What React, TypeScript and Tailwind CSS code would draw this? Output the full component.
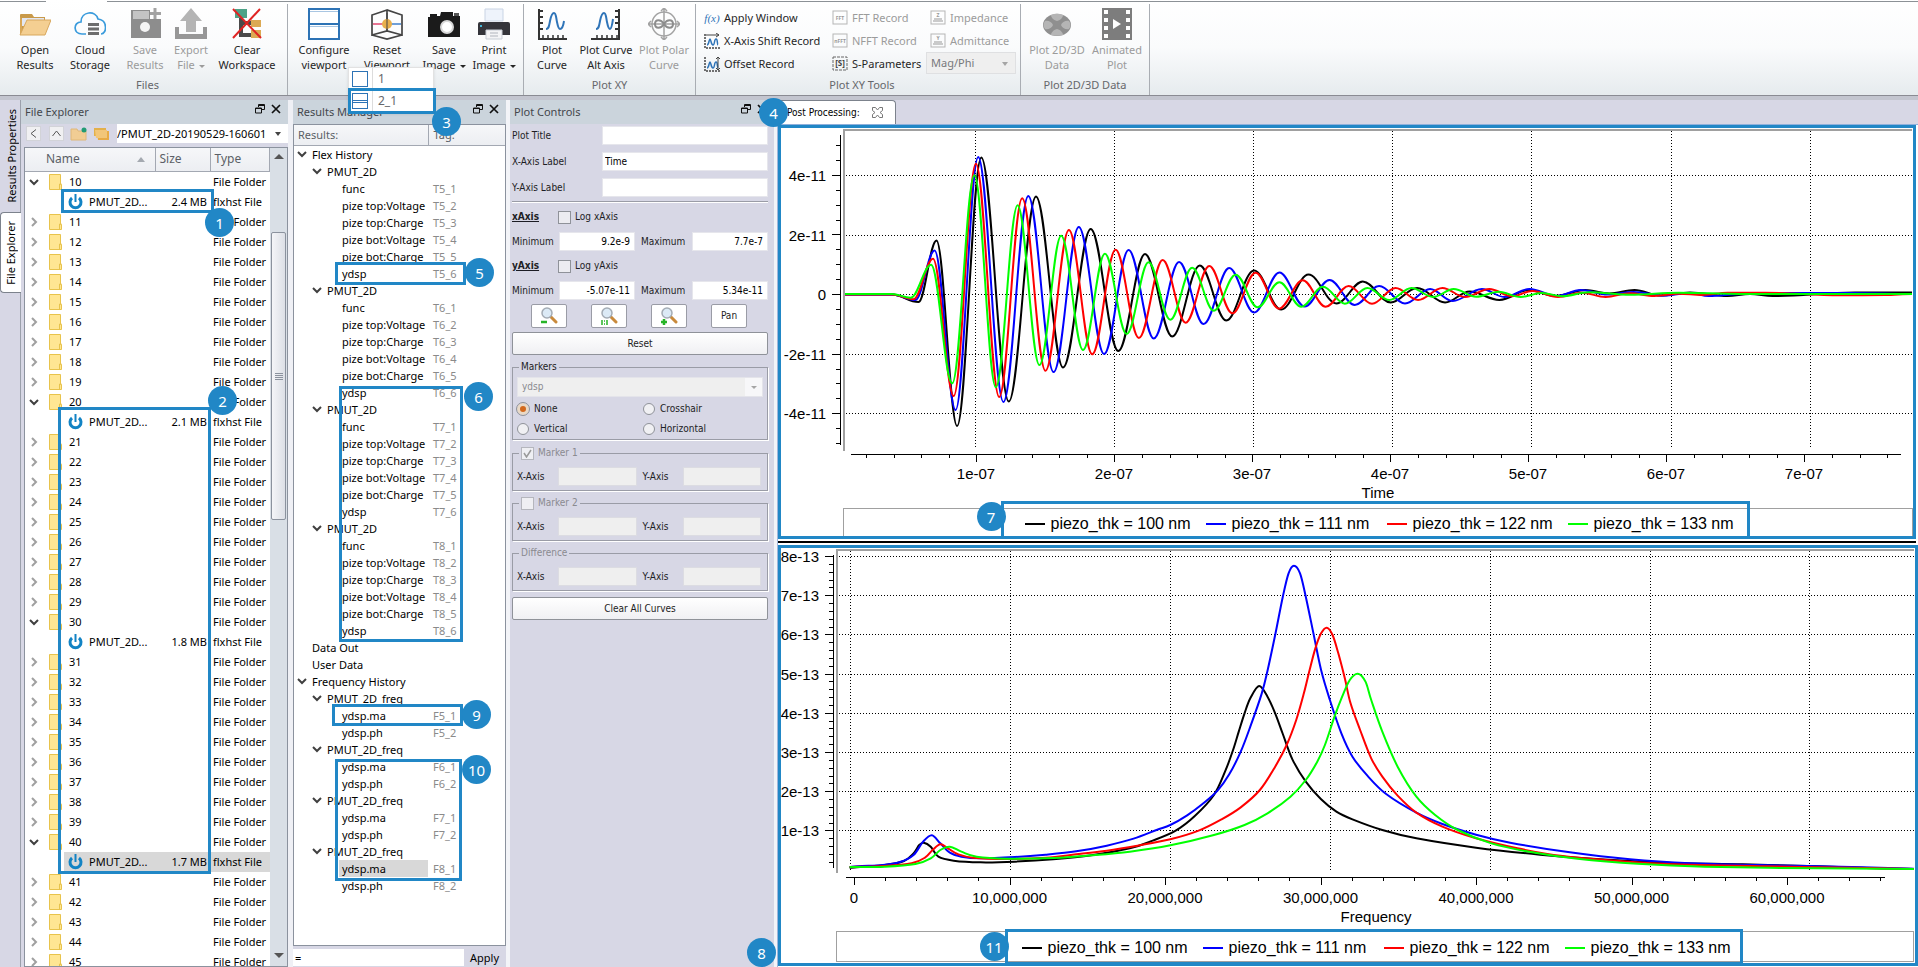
import type { ReactNode } from "react";
import clsx from "clsx";

/* ---------- data ---------- */

type FileRow = { name: string; size?: string; open?: boolean; selected?: boolean };

const sizes: Record<number, string> = { 10: "2.4 MB", 20: "2.1 MB", 30: "1.8 MB", 40: "1.7 MB" };

const fileRows: FileRow[] = [];
for (let n = 10; n <= 45; n++) {
  fileRows.push({ name: String(n), open: n in sizes });
  if (n in sizes) fileRows.push({ name: "PMUT_2D...", size: sizes[n], selected: n === 40 });
}

type ResultRow = { level: number; name: string; tag?: string; open?: boolean; selected?: boolean };

const flexNames = ["func", "pize top:Voltage", "pize top:Charge", "pize bot:Voltage", "pize bot:Charge", "ydsp"];
const freqNames = ["ydsp.ma", "ydsp.ph"];
const runs = [5, 6, 7, 8];

const resultRows: ResultRow[] = [
  { level: 0, name: "Flex History", open: true },
  ...runs.flatMap((r) => [
    { level: 1, name: "PMUT_2D", open: true },
    ...flexNames.map((name, i) => ({ level: 2, name, tag: `T${r}_${i + 1}` })),
  ]),
  { level: 0, name: "Data Out" },
  { level: 0, name: "User Data" },
  { level: 0, name: "Frequency History", open: true },
  ...runs.flatMap((r) => [
    { level: 1, name: "PMUT_2D_freq", open: true },
    ...freqNames.map((name, i) => ({ level: 2, name, tag: `F${r}_${i + 1}`, selected: r === 8 && i === 0 })),
  ]),
];

const legend = [
  { label: "piezo_thk = 100 nm", line: "bg-black" },
  { label: "piezo_thk = 111 nm", line: "bg-[#0000ff]" },
  { label: "piezo_thk = 122 nm", line: "bg-[#ff0000]" },
  { label: "piezo_thk = 133 nm", line: "bg-[#00ff00]" },
];
const colors = ["#000000", "#0000ff", "#ff0000", "#00ff00"];

type Pt = [number, number];

// turning points of each time history
const timeCurves: Pt[][] = [
  [[65, 166.5], [112, 166.5], [138.5, 174], [156.5, 112.5], [177.1, 298], [201.3, 29.5], [228.8, 273.5], [256, 68.5], [283.1, 239.5], [310.7, 101], [338.3, 223], [365, 126], [392.2, 208.5], [419.8, 137.5], [446.2, 192.5], [474.1, 142.5], [501.3, 181.5], [528.5, 146.5], [556.4, 175.5], [582.8, 153.5], [610.7, 174.5], [637.1, 160], [665.1, 174.5], [689.6, 163.5], [719.4, 172], [748.9, 162], [774.9, 168], [805.2, 162], [829.3, 165.5], [854.5, 162], [880.2, 167.5], [910, 164.5], [947.5, 168], [970, 166], [992.7, 168], [1075, 164.5], [1132, 164.5]],
  [[65, 166.5], [112, 166.5], [135.4, 172], [154.6, 122.5], [175.6, 282], [198.2, 29], [223.4, 274], [248.3, 68], [273.6, 244], [298.8, 99], [324.1, 226], [348.6, 122], [373.8, 210.5], [399.1, 134], [423.6, 196], [449.2, 140], [474.1, 184.5], [499.4, 144.5], [524.6, 178.5], [549.5, 152], [574.8, 177], [599.1, 158], [625, 175.5], [650.1, 161], [672.6, 173], [701.9, 161], [724.4, 169], [749.5, 161], [776.8, 168], [800.5, 162], [827.5, 166.5], [853.7, 164], [883.7, 167.5], [910, 165], [928.7, 168], [962.5, 166], [1011, 165], [1070, 165], [1132, 166]],
  [[65, 166.5], [112, 166.5], [133.5, 171.3], [153, 130.7], [173.7, 268], [195.9, 35.7], [219.2, 269], [242.2, 70.3], [265.5, 242.7], [288.9, 102], [312.2, 226.3], [335.6, 121.7], [358.9, 210], [382.7, 132], [405.6, 194.7], [429.3, 138], [452.3, 185.3], [475.6, 144.7], [499, 180.7], [522.7, 152.3], [545.7, 178.7], [568.6, 158], [592, 175.7], [615.6, 160], [638.1, 172], [662.4, 160], [685, 169], [709.4, 161], [731.9, 168.3], [752.3, 163], [778, 169], [802, 164.7], [825.6, 169], [850, 165.3], [874.4, 168], [898.7, 165.7], [922, 167], [947.5, 164.7], [985, 164.7], [1060, 167.3], [1105, 167], [1132, 166]],
  [[65, 166], [112, 166], [130.8, 169.7], [151.1, 136.7], [172.2, 255.3], [194.4, 47.3], [215.8, 259.3], [237.6, 77.3], [259.4, 237], [281.2, 107.7], [303, 222], [324.9, 125.7], [346.7, 206], [368.5, 134.3], [390.3, 191.7], [412.1, 139.7], [433.9, 182.7], [455.7, 146.7], [477.6, 179.3], [499.4, 154.3], [521.2, 178.7], [543, 158.7], [564.8, 175.7], [587.4, 160], [609.2, 172], [631.4, 160], [653.1, 169], [673.7, 161], [696.2, 168.7], [718.8, 163.7], [740.5, 169], [761.9, 165], [782.5, 168.3], [808.8, 164.3], [850, 166.7], [898.7, 164.7], [960, 166], [1132, 166]],
];

// frequency spectra, in samples of the plot raster
const freqCurves: Pt[][] = [
  [[208, 1013], [300, 1005], [350, 993], [375, 970], [390, 945], [402, 938], [420, 950], [440, 980], [480, 992], [550, 997], [640, 995], [740, 988], [840, 976], [940, 955], [1000, 932], [1060, 902], [1110, 858], [1160, 795], [1190, 722], [1210, 660], [1225, 604], [1240, 550], [1255, 505], [1278, 468], [1300, 500], [1320, 550], [1340, 612], [1365, 688], [1400, 755], [1440, 808], [1480, 845], [1522, 868], [1600, 900], [1689, 925], [1845, 953], [2012, 974], [2169, 988], [2345, 998], [2541, 1003], [2737, 1009], [2865, 1014], [2989, 1017]],
  [[208, 1011], [240, 1008], [290, 1006], [340, 996], [375, 975], [400, 935], [423, 916], [445, 940], [470, 968], [500, 980], [550, 985], [640, 981], [720, 974], [800, 964], [880, 947], [950, 926], [1010, 900], [1046, 885], [1090, 856], [1130, 822], [1170, 781], [1200, 733], [1230, 665], [1255, 590], [1285, 490], [1300, 422], [1320, 315], [1340, 200], [1355, 130], [1369, 107], [1385, 130], [1400, 200], [1420, 310], [1440, 420], [1463, 510], [1493, 610], [1522, 680], [1561, 737], [1610, 792], [1689, 848], [1757, 882], [1845, 914], [1934, 938], [2090, 967], [2247, 988], [2404, 1000], [2580, 1005], [2855, 1012], [2989, 1016]],
  [[208, 1011], [300, 1008], [370, 1000], [405, 983], [425, 960], [445, 943], [465, 955], [490, 972], [530, 983], [620, 987], [720, 983], [800, 973], [880, 962], [960, 947], [1046, 928], [1120, 902], [1180, 868], [1230, 832], [1280, 780], [1320, 710], [1350, 645], [1375, 570], [1395, 490], [1410, 420], [1425, 355], [1440, 310], [1455, 293], [1470, 315], [1485, 370], [1502, 445], [1517, 520], [1542, 600], [1571, 685], [1600, 740], [1640, 797], [1689, 848], [1757, 890], [1845, 925], [1953, 955], [2071, 978], [2208, 992], [2345, 1002], [2600, 1009], [2865, 1014], [2989, 1017]],
  [[208, 1011], [300, 1010], [380, 1002], [420, 985], [445, 960], [470, 950], [500, 965], [540, 980], [620, 986], [740, 984], [840, 976], [940, 965], [1046, 946], [1160, 915], [1240, 885], [1300, 850], [1360, 800], [1400, 750], [1430, 695], [1450, 645], [1475, 560], [1495, 500], [1515, 450], [1536, 431], [1556, 455], [1571, 510], [1600, 605], [1640, 710], [1689, 800], [1738, 855], [1797, 900], [1885, 940], [1992, 967], [2110, 986], [2267, 1001], [2443, 1010], [2737, 1015], [2989, 1017]],
];

// half-cosine between two turning points
function wavePath(pts: Pt[]) {
  let d = `M${pts[0][0]} ${pts[0][1]}`;
  for (let i = 1; i < pts.length; i++) {
    const [x0, y0] = pts[i - 1];
    const [x1, y1] = pts[i];
    const k = (x1 - x0) * 0.364;
    d += `C${x0 + k} ${y0} ${x1 - k} ${y1} ${x1} ${y1}`;
  }
  return d;
}

// Catmull-Rom through the samples
function splinePath(raw: Pt[]) {
  const p = raw.map(([x, y]): Pt => [x / 2.613 - 10, y / 3 - 18]);
  let d = `M${p[0][0]} ${p[0][1]}`;
  for (let i = 0; i < p.length - 1; i++) {
    const a = p[Math.max(i - 1, 0)];
    const b = p[i];
    const c = p[i + 1];
    const e = p[Math.min(i + 2, p.length - 1)];
    d += `C${b[0] + (c[0] - a[0]) / 6} ${b[1] + (c[1] - a[1]) / 6} ${c[0] - (e[0] - b[0]) / 6} ${c[1] - (e[1] - b[1]) / 6} ${c[0]} ${c[1]}`;
  }
  return d;
}

const range = (n: number) => Array.from({ length: n }, (_, i) => i);

/* ---------- callouts ---------- */

function Badge({ n, className }: { n: number; className: string }) {
  return (
    <span
      className={clsx(
        "absolute z-30 flex size-[29px] items-center justify-center rounded-full bg-[#2187c6] font-['Noto_Sans',sans-serif] text-[15px] text-white",
        className
      )}
    >
      {n}
    </span>
  );
}

function Frame({ className }: { className: string }) {
  return <div className={clsx("pointer-events-none absolute z-20 border-3 border-[#2187c6]", className)} />;
}

/* ---------- icons ---------- */

function Icon({ children, size = 32 }: { children: ReactNode; size?: number }) {
  return (
    <svg width={size} height={size} viewBox={`0 0 ${size} ${size}`} className="shrink-0" fill="none">
      {children}
    </svg>
  );
}

const OpenIcon = () => (
  <Icon>
    <path d="M1 27V7q0-1 1-1h11l2 3h11v5" fill="#c99a4a" />
    <path d="M3 10h22v8H3z" fill="#e3e7f1" />
    <path d="M1 27V9l2 2v12z" fill="#d9a859" />
    <path d="M1 27L8 12h24l-6 15z" fill="#f4cf92" stroke="#d8a75c" />
  </Icon>
);
const CloudIcon = () => (
  <Icon>
    <path d="M12 26H8C-1 26-1 14 7 14 7 3 22 2 24 11 34 12 33 26 27 26" stroke="#3a9bdc" strokeWidth="1.700" />
    <path d="M14 15h11v3H14zM14 19.500h11v3H14zM14 24h11v3H14z" fill="#6d6d6d" />
  </Icon>
);
const SaveIcon = () => (
  <Icon>
    <path d="M2 2h19v9h11v19H2z" fill="#8d8d8d" />
    <path d="M4 3h16v8H4z" fill="#c4c4c4" />
    <path d="M26 0v11M21 5.500h11" stroke="#a3a3a3" strokeWidth="3" />
    <circle cx="16" cy="19" r="5" fill="#f4f4f4" />
  </Icon>
);
const ExportIcon = () => (
  <Icon>
    <path d="M16 0l11 13h-6v11H11V13H5z" fill="#b4b4b4" />
    <path d="M0 19h4v7h24v-7h4v12H0z" fill="#979797" />
  </Icon>
);
const ClearIcon = () => (
  <Icon>
    <path d="M10 8v19h10M10 15h10" stroke="#4a4a4a" strokeWidth="4" />
    <path d="M4 1h12v9H4z" fill="#4da287" />
    <path d="M20 12h10v7H20zM20 22h10v8H20z" fill="#dca954" />
    <path d="M2 1l28 29M29 1L2 30" stroke="#e02424" strokeWidth="2" />
  </Icon>
);
const ConfigureIcon = () => (
  <Icon>
    <path d="M1 1h30v30H1z" fill="#fff" stroke="#2d73b5" strokeWidth="2" />
    <path d="M2 3.500h28M2 18.500h28" stroke="#a9c6e2" />
    <path d="M1 16h30" stroke="#2d73b5" strokeWidth="2" />
  </Icon>
);
const ResetIcon = () => (
  <Icon>
    <path d="M16 2L1 7v20l15-4 15 4V7z M16 2v21 M1 27l15 4 15-4" stroke="#444" strokeWidth="1.700" />
    <path d="M2 16h10" stroke="#e0466e" strokeWidth="1.500" />
    <path d="M20 16h10" stroke="#6f9fd8" strokeWidth="2" />
    <circle cx="16" cy="16" r="5" fill="#e8b04e" />
    <path d="M16 5v18" stroke="#444" strokeWidth="1" />
  </Icon>
);
const CameraIcon = () => (
  <Icon>
    <path d="M0 9h2V6h7v2h3l1-4h12v4h7v21H0z" fill="#1b1b1b" />
    <path d="M26 5h5v3h-5z" fill="#555" />
    <circle cx="19" cy="19" r="7" fill="#d8d8d8" />
    <circle cx="19" cy="19" r="5" fill="#fff" />
  </Icon>
);
const PrintIcon = () => (
  <Icon>
    <path d="M7 1h18v12H7z" fill="#eef3fb" stroke="#c9d4e4" />
    <path d="M0 16q0-2 2-2h28q2 0 2 2v11H0z" fill="#34343a" />
    <path d="M2 18h2" stroke="#44b6d8" strokeWidth="2" />
    <path d="M8 22h16v9H8z" fill="#f4f4f6" stroke="#c9ced6" />
    <path d="M12 25h8M12 28h8" stroke="#b0b4bc" />
  </Icon>
);
const PlotIcon = ({ alt }: { alt?: boolean }) => (
  <Icon>
    <path d={alt ? "M29 1v30H1M29 3h-4M29 9h-4M29 15h-4M29 21h-4" : "M3 1v30h28M3 3h4M3 9h4M3 15h4M3 21h4"} stroke="#333" strokeWidth="2" />
    <path d="M7 30v-3M12 30v-3M17 30v-3M22 30v-3M27 30v-3" stroke="#333" strokeWidth="1.500" />
    <path d={alt ? "M6 21c3 0 3-3 4-8s2-8 4-8 2 4 3 9 2 7 3 7 2-3 3-10" : "M10 21c3 0 3-3 4-8s2-8 4-8 2 4 3 9 2 7 3 7 3-1 4-8"} stroke="#2f74b8" strokeWidth="2" />
  </Icon>
);
const PolarIcon = () => (
  <Icon>
    <circle cx="16" cy="16" r="12" stroke="#a3a3a3" strokeWidth="1.500" />
    <path d="M16 0v32M0 16h32M13 3l3-3 3 3M13 29l3 3 3-3M3 13l-3 3 3 3M29 13l3 3-3 3" stroke="#a3a3a3" strokeWidth="1.500" />
    <path d="M16 16c-3-5-9-5-9 0s6 5 9 0 9-5 9 0-6 5-9 0" stroke="#8d8d8d" strokeWidth="2" />
  </Icon>
);
const Plot3dIcon = () => (
  <Icon>
    <ellipse cx="16" cy="17" rx="14" ry="11" fill="#8f8f8f" />
    <path d="M16 13c-4-1-6-4-6-6 4-2 8-2 12 0 0 2-2 5-6 6zM16 21c-4 1-6 4-6 6 4 1 8 1 12 0 0-2-2-5-6-6zM12 17c-1-3-5-5-8-4-2 3-2 5 0 8 3 1 7-1 8-4zM20 17c1-3 5-5 8-4 2 3 2 5 0 8-3 1-7-1-8-4z" fill="#b5b5b5" />
  </Icon>
);
const FilmIcon = () => (
  <Icon>
    <path d="M1 0h30v32H1z" fill="#7d7d7d" />
    <path d="M3 2h4v4H3zM3 10h4v4H3zM3 18h4v4H3zM3 26h4v4H3zM25 2h4v4h-4zM25 10h4v4h-4zM25 18h4v4h-4zM25 26h4v4h-4z" fill="#fff" />
    <path d="M12 11l8 5-8 5z" fill="#fff" />
  </Icon>
);

const ShiftIcon = ({ vertical }: { vertical?: boolean }) => (
  <Icon size={16}>
    <path d="M1 1v14h15" stroke="#444" strokeDasharray="2 1" strokeWidth="1.500" />
    <path d="M3 12c2 0 2-6 3-6s1 6 3 6 1-6 3-6 1 6 2 6" stroke="#2f74b8" strokeWidth="1.500" />
    {vertical ? (
      <path d="M14 1v13M12 3l2-2 2 2M12 12l2 2 2-2" stroke="#444" />
    ) : (
      <path d="M2 2h13M12 0l3 2-3 2" stroke="#444" />
    )}
  </Icon>
);
const BoxIcon = ({ text, dark }: { text: string; dark?: boolean }) => (
  <Icon size={16}>
    <rect x="1" y="1" width="14" height="13" stroke={dark ? "#666" : "#b5b5b5"} strokeDasharray={dark ? "3 1" : undefined} />
    <text x="8" y="10" textAnchor="middle" fontSize={dark ? 8 : 5} fontWeight="bold" fill={dark ? "#444" : "#999"}>
      {text}
    </text>
  </Icon>
);
const MatrixIcon = ({ text }: { text: string }) => (
  <Icon size={16}>
    <rect x="1" y="1" width="14" height="13" stroke="#b5b5b5" />
    <text x="8" y="7" textAnchor="middle" fontSize="5" fontWeight="bold" fill="#999">
      {text}
    </text>
    <path d="M4 9h8M3 11h10" stroke="#999" />
  </Icon>
);

const Chevron = ({ open }: { open?: boolean }) => (
  <svg width="10" height="10" viewBox="0 0 10 10" fill="none" className="shrink-0">
    {open ? <path d="M1 3l4 4 4-4" stroke="#404040" strokeWidth="2" /> : <path d="M3 1l4 4-4 4" stroke="#a0a0a0" strokeWidth="2" />}
  </svg>
);
const FolderIcon = () => (
  <svg width="13" height="16" viewBox="0 0 13 16" className="shrink-0">
    <path d="M.5.5h11v10h1v5H.5z" fill="#ffe693" stroke="#e8c34c" />
    <path d="M10.5 15v-5h2" fill="none" stroke="#e8c34c" />
  </svg>
);
const PowerIcon = () => (
  <svg width="15" height="16" viewBox="0 0 15 16" fill="none" className="shrink-0">
    <path d="M4 4a5.5 5.5 0 1 0 7 0" stroke="#1283c4" strokeWidth="3" />
    <path d="M7.500 0v8" stroke="#1283c4" strokeWidth="2" />
  </svg>
);
const Magnifier = ({ kind }: { kind: "minus" | "one" | "plus" }) => (
  <svg width="18" height="18" viewBox="0 0 18 18" fill="none">
    <path d="M10 9l6 6" stroke="#c98a3c" strokeWidth="3" strokeLinecap="round" />
    <circle cx="7" cy="6" r="5" fill="#dceaf6" stroke="#a4acb5" strokeWidth="1.500" />
    {kind === "minus" && <path d="M1 15h6" stroke="#27b427" strokeWidth="2.500" />}
    {kind === "plus" && <path d="M1 15h6M4 12v6" stroke="#27b427" strokeWidth="2.500" />}
    {kind === "one" && <path d="M2 13v5M7 13v5M4 14h1M4 17h1" stroke="#27b427" strokeWidth="1.500" />}
  </svg>
);

/* ---------- ribbon ---------- */

type BigButtonProps = { icon: ReactNode; top: string; bottom: string; width: string; disabled?: boolean; menu?: boolean };

function BigButton({ icon, top, bottom, width, disabled, menu }: BigButtonProps) {
  return (
    <button
      type="button"
      disabled={disabled}
      className={clsx("flex shrink-0 flex-col items-center whitespace-nowrap leading-[15px]", width, disabled ? "text-[#9b9b9b]" : "text-[#262626]")}
    >
      {icon}
      <span className="mt-0.5">{top}</span>
      <span className="flex items-center gap-1">
        {bottom}
        {menu && <span className="mt-1 border-x-3 border-t-3 border-x-transparent border-t-current" />}
      </span>
    </button>
  );
}

function Group({ label, children, className }: { label: string; children: ReactNode; className: string }) {
  return (
    <div className={clsx("flex shrink-0 flex-col border-r border-[#a9adb3]", className)}>
      <div className="flex h-[70px] pt-1">{children}</div>
      <div className="pt-[3px] text-center text-[#66676b]">{label}</div>
    </div>
  );
}

function SmallButton({ icon, children, disabled }: { icon: ReactNode; children: ReactNode; disabled?: boolean }) {
  return (
    <button type="button" disabled={disabled} className={clsx("flex h-[23px] items-center gap-1 whitespace-nowrap", disabled ? "text-[#9b9b9b]" : "text-[#262626]")}>
      {icon}
      {children}
    </button>
  );
}

function Ribbon() {
  return (
    <header className="shrink-0 border-b border-[#8a8b93] bg-linear-to-b from-white via-[#fafbfc] to-[#e6ebee]">
      <div className="flex h-1 items-start">
        <div className="h-0.5 w-[46px] border-b border-[#8c9196]" />
        <div className="w-[61px]" />
        <div className="h-0.5 flex-1 border-b border-[#8c9196]" />
      </div>
      <div className="flex h-[91px]">
        <Group label="Files" className="w-[288px] pl-2">
          <BigButton icon={<OpenIcon />} top="Open" bottom="Results" width="w-[54px]" />
          <BigButton icon={<CloudIcon />} top="Cloud" bottom="Storage" width="w-14" />
          <BigButton icon={<SaveIcon />} top="Save" bottom="Results" width="w-[54px]" disabled />
          <BigButton icon={<ExportIcon />} top="Export" bottom="File" width="w-[38px]" disabled menu />
          <BigButton icon={<ClearIcon />} top="Clear" bottom="Workspace" width="w-[74px]" />
        </Group>
        <Group label="" className="w-[236px]">
          <BigButton icon={<ConfigureIcon />} top="Configure" bottom="viewport" width="w-[72px]" />
          <BigButton icon={<ResetIcon />} top="Reset" bottom="Viewport" width="w-[54px]" />
          <BigButton icon={<CameraIcon />} top="Save" bottom="Image" width="w-[60px]" menu />
          <BigButton icon={<PrintIcon />} top="Print" bottom="Image" width="w-10" menu />
        </Group>
        <Group label="Plot XY" className="w-[172px]">
          <BigButton icon={<PlotIcon />} top="Plot" bottom="Curve" width="w-14" />
          <BigButton icon={<PlotIcon alt />} top="Plot Curve" bottom="Alt Axis" width="w-[52px]" />
          <BigButton icon={<PolarIcon />} top="Plot Polar" bottom="Curve" width="w-16" disabled />
        </Group>
        <Group label="Plot XY Tools" className="w-[325px] pl-2">
          <div className="-mt-0.5 w-32">
            <SmallButton icon={<span className="w-4 text-center font-['Liberation_Serif',serif] text-[11px] text-[#2f74b8] italic">f(x)</span>}>Apply Window</SmallButton>
            <SmallButton icon={<ShiftIcon />}>X-Axis Shift Record</SmallButton>
            <SmallButton icon={<ShiftIcon vertical />}>Offset Record</SmallButton>
          </div>
          <div className="-mt-0.5 w-[98px]">
            <SmallButton icon={<BoxIcon text="FFT" />} disabled>FFT Record</SmallButton>
            <SmallButton icon={<BoxIcon text="nFFT" />} disabled>NFFT Record</SmallButton>
            <SmallButton icon={<BoxIcon text="[S]" dark />}>S-Parameters</SmallButton>
          </div>
          <div className="-mt-0.5">
            <SmallButton icon={<MatrixIcon text="Z" />} disabled>Impedance</SmallButton>
            <SmallButton icon={<MatrixIcon text="Y" />} disabled>Admittance</SmallButton>
            <div className="relative -ml-1 w-[90px]">
              <select aria-label="S-parameter format" disabled className="block h-[22px] w-full appearance-none border border-[#dfe0e2] bg-[#efefef] pl-1 text-[#77787c] opacity-100">
                <option>Mag/Phi</option>
              </select>
              <span className="absolute top-2.5 right-2 border-x-3 border-t-4 border-x-transparent border-t-[#a5a5a5]" />
            </div>
          </div>
        </Group>
        <Group label="Plot 2D/3D Data" className="w-[129px]">
          <BigButton icon={<Plot3dIcon />} top="Plot 2D/3D" bottom="Data" width="w-[72px]" disabled />
          <BigButton icon={<FilmIcon />} top="Animated" bottom="Plot" width="w-12" disabled />
        </Group>
      </div>
    </header>
  );
}

function ViewportMenu() {
  return (
    <div className="absolute top-[67px] left-[348px] z-10 w-[86px] border border-[#e2e2e2] bg-white text-[12px] text-[#66676b] shadow-sm">
      {["1", "2_1"].map((item) => (
        <button key={item} type="button" className="flex h-[22px] w-full items-center text-left">
          <span className="flex h-full w-6 items-center border-r border-[#dcdcdc] pl-[3px]">
            <span className="flex size-4 flex-col justify-center border border-[#2d73b5]">
              {item === "2_1" && <span className="h-[3px] border-y border-[#2d73b5]" />}
            </span>
          </span>
          <span className="pl-[5px]">{item}</span>
        </button>
      ))}
    </div>
  );
}

/* ---------- docks ---------- */

function DockTitle({ children }: { children: ReactNode }) {
  return (
    <div className="flex h-6 shrink-0 items-center bg-[#cbd4dc] pr-[7px] pl-1 text-[#44474c]">
      <h2 className="flex-1">{children}</h2>
      <button type="button" aria-label="Float" className="mr-1.5 mb-1.5">
        <svg width="10" height="10" viewBox="0 0 10 10" fill="none" stroke="#111">
          <path d="M3.500 3V.500h6v5H7M3 1.500h7M.500 4h6v5h-6zM0 4.500h7" />
        </svg>
      </button>
      <button type="button" aria-label="Close" className="mb-1.5">
        <svg width="10" height="10" viewBox="0 0 10 10" stroke="#111" strokeWidth="1.700">
          <path d="M1 1l8 8M9 1L1 9" />
        </svg>
      </button>
    </div>
  );
}

function SideTabs() {
  return (
    <nav className="flex w-[21px] shrink-0 flex-col border-r border-[#9ba0ab]">
      <button type="button" className="flex h-[112px] items-center justify-center whitespace-nowrap pl-1">
        <span className="rotate-180 [writing-mode:vertical-rl]">Results Properties</span>
      </button>
      <button type="button" className="flex h-[81px] w-[21px] items-center justify-center rounded-l-sm border border-r-0 border-[#7c828c] bg-white whitespace-nowrap">
        <span className="rotate-180 [writing-mode:vertical-rl]">File Explorer</span>
      </button>
    </nav>
  );
}

const toolBtn = "flex h-[15px] w-[15px] items-center justify-center border border-[#d2d3d8] bg-[#f0f0f2] text-[#555]";

function FileExplorer() {
  return (
    <section className="flex w-[267px] shrink-0 flex-col">
      <DockTitle>File Explorer</DockTitle>
      <div className="flex h-[23px] shrink-0 items-start pl-[5px]">
        <div className="flex h-[19px] flex-1 items-center">
          <button type="button" aria-label="Back" className={toolBtn}>
            <svg width="7" height="9" viewBox="0 0 7 9" fill="none" stroke="currentColor"><path d="M6 .5L1 4.500l5 4" /></svg>
          </button>
          <button type="button" aria-label="Up" className={clsx(toolBtn, "ml-2")}>
            <svg width="9" height="7" viewBox="0 0 9 7" fill="none" stroke="currentColor"><path d="M.5 6L4.500 1l4 5" /></svg>
          </button>
          <button type="button" aria-label="New folder" className="ml-1.5">
            <svg width="17" height="14" viewBox="0 0 17 14">
              <path d="M1 2h6l1 2h8v9H1z" fill="#f1cd94" stroke="#e0b878" />
              <circle cx="14" cy="3" r="2.500" fill="#219c74" />
            </svg>
          </button>
          <button type="button" aria-label="Folders" className="ml-1.5">
            <svg width="17" height="14" viewBox="0 0 17 14">
              <path d="M1 1h12v8H1z" fill="#e3b04a" />
              <path d="M4 4h12v9H5z" fill="#e8ab45" />
              <path d="M2 3h12v8H3z" fill="#f2c679" />
            </svg>
          </button>
        </div>
        <div className="flex h-[19px] w-[171px] items-center bg-white">
          <div className="flex w-[150px] justify-end overflow-hidden">
            <select aria-label="Folder path" className="shrink-0 appearance-none bg-white text-black">
              <option>D/PMUT_2D-20190529-160601</option>
            </select>
          </div>
          <span className="ml-2 border-x-3 border-t-4 border-x-transparent border-t-[#444]" />
        </div>
      </div>
      <div className="ml-[3px] flex min-h-0 flex-1 border border-[#8b929e] bg-white">
        <div className="min-w-0 flex-1 overflow-hidden">
          <table className="w-full table-fixed border-collapse">
            <thead>
              <tr className="h-[23px] bg-linear-to-b from-[#f6f7f9] to-[#eceef2] text-left text-[12px] text-[#5b5f66]">
                <th className="w-[130px] border-r border-b border-[#a3a8b2] p-0 pl-[21px] font-normal">
                  <span className="flex items-center justify-between pr-2.5">
                    Name
                    <span className="border-x-4 border-b-5 border-x-transparent border-b-[#a4a9b0]" />
                  </span>
                </th>
                <th className="w-[55px] border-r border-b border-[#a3a8b2] p-0 pl-1 font-normal">Size</th>
                <th className="border-r border-b border-[#a3a8b2] p-0 pl-1 font-normal">Type</th>
              </tr>
            </thead>
            <tbody className="whitespace-nowrap">
              {fileRows.map((row, i) => (
                <tr key={i} className="h-5">
                  <td className="overflow-hidden p-0">
                    {row.size ? (
                      <div className={clsx("ml-[39px] flex h-5 items-center gap-1.5 pl-1", row.selected && "bg-[#d8d8d8]")}>
                        <PowerIcon />
                        {row.name}
                      </div>
                    ) : (
                      <div className="flex h-5 items-center pl-1">
                        <Chevron open={row.open} />
                        <span className="ml-2.5 flex items-center gap-[7px]">
                          <FolderIcon />
                          {row.name}
                        </span>
                      </div>
                    )}
                  </td>
                  <td className={clsx("p-0 pr-[3px] text-right", row.selected && "bg-[#d8d8d8]")}>{row.size}</td>
                  <td className={clsx("overflow-hidden p-0 pl-[3px]", row.selected && "bg-[#d8d8d8]")}>{row.size ? "flxhst File" : "File Folder"}</td>
                </tr>
              ))}
            </tbody>
          </table>
        </div>
        <div className="flex w-[17px] shrink-0 flex-col items-center bg-[#d9dfe6]">
          <span className="mt-1.5 mb-[73px] border-x-5 border-b-5 border-x-transparent border-b-[#555]" />
          <div className="flex h-[288px] w-[15px] flex-col items-center justify-center gap-px rounded-xs border border-[#8b929e] bg-linear-to-r from-[#f4f5f8] to-[#dcdfe6]">
            {range(4).map((i) => (
              <span key={i} className="h-px w-2 bg-[#8b929e]" />
            ))}
          </div>
          <span className="mt-auto mb-2 border-x-5 border-t-5 border-x-transparent border-t-[#555]" />
        </div>
      </div>
    </section>
  );
}

function ResultsManager() {
  return (
    <section className="flex w-[213px] shrink-0 flex-col">
      <DockTitle>Results Manager</DockTitle>
      <div className="min-h-0 flex-1 border border-[#8b929e] bg-white">
        <table className="w-full table-fixed border-collapse">
          <thead>
            <tr className="h-5 bg-linear-to-b from-[#f6f7f9] to-[#eceef2] text-left text-[#5b5f66]">
              <th className="w-[134px] border-r border-b border-[#a3a8b2] p-0 pl-1 font-normal">Results:</th>
              <th className="border-b border-[#a3a8b2] p-0 pl-[5px] font-normal">Tag:</th>
            </tr>
          </thead>
          <tbody className="whitespace-nowrap leading-[17px]">
            {resultRows.map((row, i) => (
              <tr key={i} className="h-[17px]">
                <td className="p-0">
                  <div className={clsx("flex h-[17px] items-center", row.level === 0 && "pl-[3px]", row.level === 1 && "pl-[18px]", row.level === 2 && "pl-[45px]")}>
                    {row.level < 2 && <span className="flex w-[15px] justify-start">{row.open && <Chevron open />}</span>}
                    <span className={clsx(row.level === 2 && "flex-1 pl-[3px]", row.selected && "bg-[#d8d8d8]")}>{row.name}</span>
                  </div>
                </td>
                <td className="p-0 pl-[5px] text-[#8a8a8a]">{row.tag}</td>
              </tr>
            ))}
          </tbody>
        </table>
      </div>
      <div className="flex h-[21px] shrink-0 items-center pt-0.5 pr-[7px]">
        <input aria-label="Expression" defaultValue="=" className="h-[17px] w-[171px] bg-white px-0.5" />
        <button type="button" className="ml-auto">Apply</button>
      </div>
    </section>
  );
}

const field = "h-[19px] min-w-0 border border-[#e6e6ec] bg-white px-0.5 text-black";
const fieldOff = "h-[19px] min-w-0 border border-[#dcdce2] bg-[#efefef]";
const wideBtn = "h-[23px] w-full shrink-0 rounded-xs border border-[#8f9299] bg-linear-to-b from-white to-[#f0f0f3]";

function TitleField({ id, label, value }: { id: string; label: string; value: string }) {
  return (
    <div className="flex items-center">
      <label htmlFor={id} className="w-[90px]">{label}</label>
      <input id={id} defaultValue={value} className={clsx(field, "flex-1")} />
    </div>
  );
}

function AxisBlock({ axis, min, max }: { axis: string; min: string; max: string }) {
  return (
    <>
      <div className="flex h-5 items-center">
        <strong className="w-[46px] underline">{axis}</strong>
        <label className="flex items-center gap-1">
          <input type="checkbox" className="size-[13px] appearance-none border border-[#8f9299] bg-[#ececf1]" />
          Log {axis}
        </label>
      </div>
      <div className="my-[5px] flex items-center">
        <label htmlFor={`${axis}-min`} className="w-[47px]">Minimum</label>
        <input id={`${axis}-min`} defaultValue={min} className={clsx(field, "w-[76px] pr-1 text-right")} />
        <label htmlFor={`${axis}-max`} className="ml-1.5 w-[51px]">Maximum</label>
        <input id={`${axis}-max`} defaultValue={max} className={clsx(field, "flex-1 pr-1 text-right")} />
      </div>
    </>
  );
}

function MarkerBox({ label, check, checked }: { label: string; check?: boolean; checked?: boolean }) {
  return (
    <fieldset className="mb-1 min-w-0 border border-[#9a9ca6] px-1 pb-1 shadow-[1px_1px_0_#fff]">
      <legend className="ml-0.5 h-4 px-0.5 leading-4 text-[#8a8a90]">
        {check ? (
          <label className="flex h-4 items-center gap-1">
            <span className="relative flex">
              <input type="checkbox" disabled defaultChecked={checked} className="size-[13px] appearance-none border border-[#b5b6bd] bg-[#efeff3]" />
              {checked && (
                <svg width="9" height="9" viewBox="0 0 9 9" fill="none" stroke="#9a9a9a" strokeWidth="1.500" className="absolute top-0.5 left-0.5">
                  <path d="M1 4l2.500 4L8 1" />
                </svg>
              )}
            </span>
            {label}
          </label>
        ) : (
          label
        )}
      </legend>
      <div className="flex items-center pt-1.5">
        <label htmlFor={`${label}-x`} className="w-[41px]">X-Axis</label>
        <input id={`${label}-x`} disabled className={clsx(fieldOff, "flex-1")} />
        <label htmlFor={`${label}-y`} className="ml-1.5 w-10">Y-Axis</label>
        <input id={`${label}-y`} disabled className={clsx(fieldOff, "mr-0.5 flex-1")} />
      </div>
    </fieldset>
  );
}

function PlotControls() {
  return (
    <section className="flex w-[264px] shrink-0 flex-col">
      <DockTitle>Plot Controls</DockTitle>
      <div className="flex flex-col pr-1.5 pl-0.5 font-['DejaVu_Sans_Condensed','DejaVu_Sans',sans-serif] text-[10px] text-[#1d1d24]">
        <div className="flex flex-col gap-[7px] pt-0.5">
          <TitleField id="plot-title" label="Plot Title" value="" />
          <TitleField id="x-label" label="X-Axis Label" value="Time" />
          <TitleField id="y-label" label="Y-Axis Label" value="" />
        </div>
        <hr className="my-1 h-0.5 border-t border-b border-t-[#9a9ca6] border-b-white" />
        <AxisBlock axis="xAxis" min="9.2e-9" max="7.7e-7" />
        <AxisBlock axis="yAxis" min="-5.07e-11" max="5.34e-11" />
        <div className="-mt-px mb-1 grid grid-cols-[36px_36px_36px_36px] gap-6 pl-[19px]">
          {(["minus", "one", "plus"] as const).map((kind) => (
            <button key={kind} type="button" aria-label={`Zoom ${kind}`} className="flex h-6 items-center justify-center rounded-xs border border-[#9a9ca6] bg-white">
              <Magnifier kind={kind} />
            </button>
          ))}
          <button type="button" className="h-6 rounded-xs border border-[#9a9ca6] bg-white">Pan</button>
        </div>
        <button type="button" className={clsx(wideBtn, "mb-1")}>Reset</button>
        <fieldset className="mb-[5px] min-w-0 border border-[#9a9ca6] px-1 shadow-[1px_1px_0_#fff]">
          <legend className="ml-0.5 h-4 px-0.5 leading-4">Markers</legend>
          <div className="relative my-0.5">
            <select aria-label="Marker curve" disabled className="block h-5 w-full appearance-none border border-[#e4e4ea] bg-[#efefef] pl-1 text-[#8a8a90] opacity-100">
              <option>ydsp</option>
            </select>
            <span className="absolute top-px right-px flex h-[18px] w-[17px] items-center justify-center bg-[#f7f7f9]">
              <span className="border-x-3 border-t-3 border-x-transparent border-t-[#a5a5a5]" />
            </span>
          </div>
          <div className="grid grid-cols-[126px_1fr]">
            {["None", "Crosshair", "Vertical", "Horizontal"].map((m) => (
              <label key={m} className="flex h-5 items-center gap-[5px]">
                <input
                  type="radio"
                  name="marker"
                  defaultChecked={m === "None"}
                  className="size-3 appearance-none rounded-full border border-[#8f9299] bg-[#f0f0f3] checked:border-3 checked:border-[#e9d9c6] checked:bg-[#d2691e] checked:outline checked:outline-[#8f9299]"
                />
                {m}
              </label>
            ))}
          </div>
        </fieldset>
        <MarkerBox label="Marker 1" check checked />
        <MarkerBox label="Marker 2" check />
        <MarkerBox label="Difference" />
        <button type="button" className={clsx(wideBtn, "mt-0.5")}>Clear All Curves</button>
      </div>
    </section>
  );
}

/* ---------- plots ---------- */

const axisText = "font-['Liberation_Sans',Arial,sans-serif] text-[15px] fill-black";

function TimePlot() {
  const labels = ["4e-11", "2e-11", "0", "-2e-11", "-4e-11"];
  return (
    <svg viewBox="0 0 1140 383" className="block w-full">
      <g shapeRendering="crispEdges" stroke="#000">
        <path d="M66 326V5H1134" fill="none" stroke="#a0a0a0" strokeWidth="2" />
        {labels.map((l, i) => (
          <line key={l} x1="68" x2="1134" y1={50.5 + Math.round(i * 59.6)} y2={50.5 + Math.round(i * 59.6)} strokeDasharray="1 2" />
        ))}
        {range(7).map((i) => (
          <line key={i} x1={197.5 + Math.round(i * 139.1)} x2={197.5 + Math.round(i * 139.1)} y1="6" y2="323" strokeDasharray="1 2" />
        ))}
        <path d="M62.500 10V320" />
        {range(21).map((i) => (
          <line key={i} x1={i % 4 === 2 ? 54 : 58} x2="62" y1={20.5 + Math.round(i * 14.9)} y2={20.5 + Math.round(i * 14.9)} />
        ))}
        <path d="M73 329.500H1123" />
        {range(38).map((i) => (
          <line key={i} x1={88.5 + Math.round(i * 27.6)} x2={88.5 + Math.round(i * 27.6)} y1="330" y2={i % 5 === 4 ? 337 : 333} />
        ))}
      </g>
      <g className={axisText}>
        {labels.map((l, i) => (
          <text key={l} x="48" y={56 + i * 59.6} textAnchor="end">{l}</text>
        ))}
        {range(7).map((i) => (
          <text key={i} x={198 + i * 138} y="354" textAnchor="middle">{i + 1}e-07</text>
        ))}
        <text x="600" y="373" textAnchor="middle">Time</text>
      </g>
      <g transform="translate(2 3)" fill="none" strokeWidth="2">
        {timeCurves.map((c, i) => (
          <path key={i} d={wavePath(c)} stroke={colors[i]} />
        ))}
      </g>
    </svg>
  );
}

function FrequencyPlot() {
  return (
    <svg viewBox="0 0 1140 386" className="block w-full">
      <g shapeRendering="crispEdges" stroke="#000">
        <path d="M59 328V5H1136" fill="none" stroke="#a0a0a0" strokeWidth="2" />
        {range(8).map((i) => (
          <line key={i} x1="61" x2="1136" y1={11.5 + Math.round(i * 39.2)} y2={11.5 + Math.round(i * 39.2)} strokeDasharray="1 2" />
        ))}
        {range(7).map((i) => (
          <line key={i} x1={72.5 + Math.round(i * 159.9)} x2={72.5 + Math.round(i * 159.9)} y1="6" y2="325" strokeDasharray="1 2" />
        ))}
        <path d="M55.500 10V323" />
        {range(40).map((i) => (
          <line key={i} x1={i % 5 === 0 ? 47 : 51} x2="55" y1={11.5 + Math.round(i * 7.84)} y2={11.5 + Math.round(i * 7.84)} />
        ))}
        <path d="M68 332.500H1107" />
        {range(34).map((i) => (
          <line key={i} x1={76.5 + Math.round(i * 31.1)} x2={76.5 + Math.round(i * 31.1)} y1="333" y2={i % 5 === 0 ? 340 : 336} />
        ))}
      </g>
      <g className={axisText}>
        {range(8).map((i) => (
          <text key={i} x="41" y={17 + i * 39.2} textAnchor="end">{8 - i}e-13</text>
        ))}
        {range(7).map((i) => (
          <text key={i} x={76 + i * 155.5} y="358" textAnchor="middle">{i === 0 ? "0" : `${i}0,000,000`}</text>
        ))}
        <text x="598" y="377" textAnchor="middle">Frequency</text>
      </g>
      <g transform="translate(2 3)" fill="none" strokeWidth="2">
        {freqCurves.map((c, i) => (
          <path key={i} d={splinePath(c)} stroke={colors[i]} />
        ))}
      </g>
    </svg>
  );
}

function Legend({ children }: { children: ReactNode }) {
  return (
    <div className="relative flex h-full items-center pt-[3px] pr-7 pl-6">
      <ul className="flex gap-[21px] font-['Liberation_Sans',Arial,sans-serif] text-[16px] whitespace-nowrap text-black">
        {legend.map((l) => (
          <li key={l.label} className="flex w-40 items-center gap-1.5">
            <span className={clsx("h-0.5 w-5 shrink-0", l.line)} />
            {l.label}
          </li>
        ))}
      </ul>
      {children}
    </div>
  );
}

function PlotArea() {
  return (
    <main className="flex min-w-0 flex-1 flex-col">
      <div className="flex h-[25px] shrink-0 items-start border-b border-[#8fb0dc]">
        <div className="flex h-6 w-[118px] items-center gap-2 rounded-t-sm border border-b-0 border-[#7c828c] bg-white pl-2 font-['DejaVu_Sans_Condensed','DejaVu_Sans',sans-serif] text-[10px] whitespace-nowrap">
          Post Processing:
          <button type="button" aria-label="Close tab" className="ml-1">
            <svg width="11" height="11" viewBox="0 0 11 11" fill="#fff" stroke="#777">
              <path d="M.5.500h3l2 2.500 2-2.500h3v3L8 5.500l2.500 2v3h-3l-2-2.500-2 2.500h-3v-3L3 5.500.500 3.500z" />
            </svg>
          </button>
        </div>
      </div>
      <section className="relative shrink-0 bg-white">
        <TimePlot />
        <div className="mr-[5px] ml-[65px] flex h-7 justify-center border border-b-0 border-[#a0a0a0]">
          <Legend>
            <Frame className="-top-2 right-1.5 -bottom-[3px] left-0" />
            <Badge n={7} className="-left-6 top-[-7px]" />
          </Legend>
        </div>
        <div className="mt-[5px] mr-0.5 h-0.5 bg-black" />
        <div className="h-0.5" />
        <Frame className="top-0 right-0.5 bottom-1.5 left-0" />
      </section>
      <section className="relative flex-1 bg-white">
        <FrequencyPlot />
        <div className="mr-1 ml-[58px] flex h-[31px] justify-center border border-[#a0a0a0]">
          <Legend>
            <Frame className="-top-[3px] right-2.5 -bottom-1 left-[7px]" />
            <Badge n={11} className="-left-[18px] top-0" />
          </Legend>
        </div>
        <Frame className="inset-x-0 top-0 bottom-px" />
      </section>
    </main>
  );
}

export default function App() {
  return (
    <div className="relative flex h-screen flex-col overflow-hidden bg-[#d7d7e5] font-['Noto_Sans',sans-serif] text-[11px] leading-4 text-black">
      <Ribbon />
      <ViewportMenu />
      <div className="flex min-h-0 flex-1 border-t-4 border-[#c3c5cf]">
        <SideTabs />
        <FileExplorer />
        <div className="w-[5px] shrink-0 bg-[#eff0f5]" />
        <ResultsManager />
        <div className="w-1 shrink-0 bg-[#f3f4f8]" />
        <PlotControls />
        <div className="w-1 shrink-0 border-r border-[#9fb6dc] bg-[#f3f4f8]" />
        <PlotArea />
      </div>

      <Frame className="top-[189px] left-[61px] h-6 w-[153px]" />
      <Badge n={1} className="top-[208px] left-[205px]" />
      <Frame className="top-[407px] left-[58px] h-[467px] w-[153px]" />
      <Badge n={2} className="top-[386px] left-[208px]" />
      <Frame className="top-[88px] left-[348px] h-[26px] w-[88px]" />
      <Badge n={3} className="top-[107px] left-[432px]" />
      <Badge n={4} className="top-[98px] left-[759px]" />
      <Frame className="top-[262px] left-[335px] h-[23px] w-[131px]" />
      <Badge n={5} className="top-[258px] left-[465px]" />
      <Frame className="top-[386px] left-[339px] h-64 w-[124px]" />
      <Badge n={6} className="top-[382px] left-[464px]" />
      <Badge n={8} className="top-[938px] left-[747px]" />
      <Frame className="top-[704px] left-[332px] h-[22px] w-[131px]" />
      <Badge n={9} className="top-[700px] left-[462px]" />
      <Frame className="top-[759px] left-[335px] h-[122px] w-[127px]" />
      <Badge n={10} className="top-[755px] left-[462px]" />
    </div>
  );
}
